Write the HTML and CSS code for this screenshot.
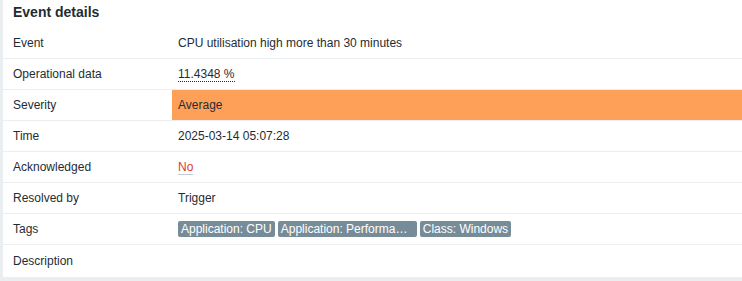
FILE: index.html
```html
<!DOCTYPE html>
<html lang="en">
<head>
  <meta charset="UTF-8">
  <title>Event details</title>
  <link rel="stylesheet" href="styles.css">
</head>
<body>
  <div class="widget">
    <h4 class="widget-head">Event details</h4>
    <table class="details">
      <tr>
        <td class="label">Event</td>
        <td>CPU utilisation high more than 30 minutes</td>
      </tr>
      <tr>
        <td class="label">Operational data</td>
        <td><span class="hint">11.4348 %</span></td>
      </tr>
      <tr>
        <td class="label">Severity</td>
        <td class="sev-average">Average</td>
      </tr>
      <tr>
        <td class="label">Time</td>
        <td>2025-03-14 05:07:28</td>
      </tr>
      <tr>
        <td class="label">Acknowledged</td>
        <td><span class="ack-no">No</span></td>
      </tr>
      <tr>
        <td class="label">Resolved by</td>
        <td>Trigger</td>
      </tr>
      <tr>
        <td class="label">Tags</td>
        <td class="tags">
          <span class="tag">Application: CPU</span>
          <span class="tag tag-long">Application: Performance</span>
          <span class="tag">Class: Windows</span>
        </td>
      </tr>
      <tr class="last">
        <td class="label">Description</td>
        <td></td>
      </tr>
    </table>
  </div>
</body>
</html>
```

FILE: styles.css
```css
/* Fondo gris del dashboard */
body {
  margin: 0;
  padding: 0 0 4px 3px;
  background-color: #ebeef0;
  font-family: "Liberation Sans", Arial, sans-serif;
  font-size: 12px;
  color: #1f2c33;
}
/* Panel del widget */
.widget {
  background-color: #fff;
}
.widget-head {
  margin: 0;
  height: 28px;
  line-height: 24px;
  padding-left: 10px;
  font-size: 14px;
  font-weight: bold;
  color: #1f2c33;
}
/* Tabla de detalles */
.details {
  width: 100%;
  border-collapse: collapse;
}
.details td {
  height: 30px;
  padding: 0 6px;
  border-bottom: 1px solid #ebeef0;
  vertical-align: middle;
  white-space: nowrap;
}
.details tr.last td {
  height: 32px;
  border-bottom: none;
}
.details td.label {
  width: 153px;
  padding-left: 10px;
}
.hint {
  border-bottom: 1px dotted #1f2c33;
}
.sev-average {
  background-color: #ffa059;
}
.ack-no {
  color: #e33734;
  border-bottom: 1px solid #c5cdd2;
}
/* Etiquetas */
.tags {
  font-size: 0;
}
.tag {
  display: inline-block;
  vertical-align: middle;
  height: 16px;
  line-height: 16px;
  padding: 0 3px;
  margin-right: 3px;
  border-radius: 2px;
  background-color: #768d99;
  color: #fff;
  font-size: 12px;
  overflow: hidden;
  text-overflow: ellipsis;
  white-space: nowrap;
}
.tag-long {
  max-width: 133px;
}
```
